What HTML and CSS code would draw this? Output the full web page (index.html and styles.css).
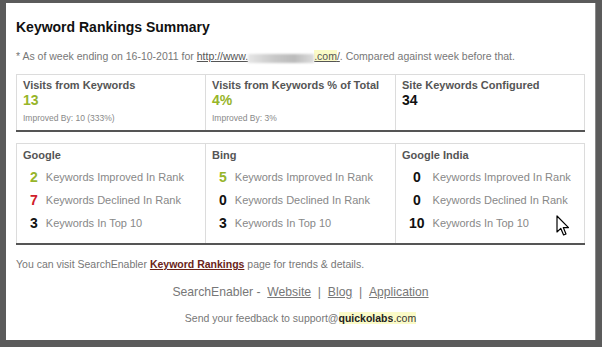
FILE: index.html
```html
<!DOCTYPE html>
<html>
<head>
<meta charset="utf-8">
<link rel="stylesheet" href="styles.css">
</head>
<body>
<div class="panel">
  <h1 class="title">Keyword Rankings Summary</h1>
  <p class="asof">* As of week ending on 16-10-2011 for <a class="url" href="#">http://www.<span class="blur">example</span><span class="hl">.com</span>/</a>. Compared against week before that.</p>

  <div class="stats">
    <div class="cell">
      <div class="label">Visits from Keywords</div>
      <div class="big green">13</div>
      <div class="note">Improved By: 10 (333%)</div>
    </div>
    <div class="cell">
      <div class="label">Visits from Keywords % of Total</div>
      <div class="big green">4%</div>
      <div class="note">Improved By: 3%</div>
    </div>
    <div class="cell">
      <div class="label">Site Keywords Configured</div>
      <div class="big black">34</div>
    </div>
  </div>

  <div class="engines">
    <div class="cell">
      <div class="label">Google</div>
      <div class="rows">
        <span class="num green">2</span><span class="txt">Keywords Improved In Rank</span>
        <span class="num red">7</span><span class="txt">Keywords Declined In Rank</span>
        <span class="num">3</span><span class="txt">Keywords In Top 10</span>
      </div>
    </div>
    <div class="cell">
      <div class="label">Bing</div>
      <div class="rows">
        <span class="num green">5</span><span class="txt">Keywords Improved In Rank</span>
        <span class="num">0</span><span class="txt">Keywords Declined In Rank</span>
        <span class="num">3</span><span class="txt">Keywords In Top 10</span>
      </div>
    </div>
    <div class="cell">
      <div class="label">Google India</div>
      <div class="rows">
        <span class="num">0</span><span class="txt">Keywords Improved In Rank</span>
        <span class="num">0</span><span class="txt">Keywords Declined In Rank</span>
        <span class="num">10</span><span class="txt">Keywords In Top 10</span>
      </div>
    </div>
  </div>

  <p class="visit">You can visit SearchEnabler <a class="kr" href="#">Keyword Rankings</a> page for trends &amp; details.</p>
  <p class="links">SearchEnabler - &nbsp;<a href="#">Website</a> &nbsp;| &nbsp;<a href="#">Blog</a> &nbsp;| &nbsp;<a href="#">Application</a></p>
  <p class="feedback">Send your feedback to support@<span class="hl strong">quickolabs</span><span class="hl">.com</span></p>

  <svg class="cursor" width="14" height="22" viewBox="0 0 14 22">
    <path d="M1 1 L1 17 L4.8 13.4 L7.6 20 L10 19 L7.3 12.6 L12.5 12.6 Z" fill="#fff" stroke="#000" stroke-width="1.2" stroke-linejoin="round"/>
  </svg>
</div>
</body>
</html>
```

FILE: styles.css
```css
html, body {
  margin: 0;
  padding: 0;
}
body {
  background: #5b5b5b;
  width: 602px;
  height: 347px;
  overflow: hidden;
  font-family: "Liberation Sans", Arial, sans-serif;
}
.panel {
  position: relative;
  margin: 3px 0 0 6px;
  width: 579px;
  height: 337px;
  padding: 0 0 0 10px;
  background: #fff;
  border-right: 1px solid #8a8a8a;
}
.title {
  margin: 0;
  padding-top: 15px;
  font-size: 14px;
  line-height: 18px;
  font-weight: bold;
  color: #111;
}
.asof {
  margin: 13px 0 0;
  font-size: 10.5px;
  line-height: 14px;
  color: #777;
}
.asof a {
  color: #555;
}
.blur {
  display: inline-block;
  width: 66px;
  height: 9px;
  line-height: 9px;
  font-size: 7px;
  color: transparent;
  background: linear-gradient(90deg, #e6e6e6, #c8c8c8 40%, #bbb 70%, #ddd);
  filter: blur(1.2px);
  vertical-align: -1px;
}
.hl {
  background: #fbfbc8;
}
.stats, .engines {
  display: grid;
  grid-template-columns: 189px 190px 190px;
  width: 569px;
  border-top: 1px solid #dcdcdc;
  border-bottom: 2px solid #555;
  box-sizing: border-box;
}
.stats {
  margin-top: 11px;
}
.engines {
  margin-top: 11px;
}
.cell {
  border-left: 1px solid #dcdcdc;
  padding: 3px 6px 6px;
}
.cell:last-child {
  border-right: 1px solid #dcdcdc;
}
.label {
  font-size: 11px;
  line-height: 14px;
  font-weight: bold;
  color: #555;
}
.big {
  font-size: 14px;
  line-height: 16px;
  font-weight: bold;
}
.green { color: #97b52a; }
.red { color: #d0202a; }
.black { color: #111; }
.note {
  margin-top: 4px;
  font-size: 8.5px;
  line-height: 12px;
  color: #888;
}
.engines .cell {
  padding: 4px 6px 11px;
}
.rows {
  display: grid;
  grid-template-columns: auto 1fr;
  column-gap: 8px;
  row-gap: 5px;
  padding: 6px 0 0 7px;
}
.num {
  justify-self: center;
  font-size: 14px;
  line-height: 18px;
  font-weight: bold;
  color: #111;
}
.num.green { color: #97b52a; }
.num.red { color: #d0202a; }
.txt {
  font-size: 11px;
  line-height: 18px;
  color: #888;
}
.visit {
  margin: 12px 0 0;
  font-size: 10.5px;
  line-height: 14px;
  color: #777;
}
.kr {
  color: #6a2418;
  font-weight: bold;
}
.links {
  margin: 14px 10px 0 0;
  text-align: center;
  font-size: 12.2px;
  line-height: 14px;
  color: #777;
}
.links a {
  color: #777;
}
.feedback {
  margin: 12px 10px 0 0;
  text-align: center;
  font-size: 10.5px;
  line-height: 14px;
  color: #777;
}
.strong {
  color: #222;
  font-weight: bold;
}
.feedback .hl:last-child {
  color: #333;
}
.cursor {
  position: absolute;
  left: 550px;
  top: 212px;
}
```
